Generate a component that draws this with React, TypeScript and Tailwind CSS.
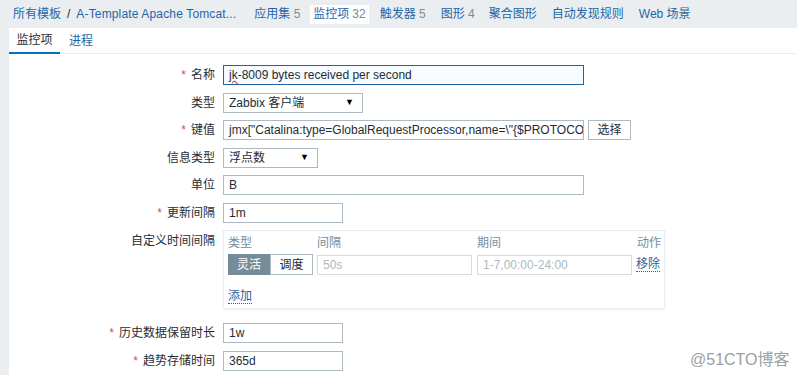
import React from "react";

const font = { fontFamily: '"Liberation Sans", Arial, "Noto Sans CJK SC", sans-serif' };

const KEY = 'jmx["Catalina:type=GlobalRequestProcessor,name=\\"{$PROTOCO';

function Req() {
  return <span className="text-[#d64e4e] mr-[5px]">*</span>;
}

function Label({ req, children }: { req?: boolean; children: React.ReactNode }) {
  return (
    <div className="h-[20px] flex items-center justify-end text-[#1f2c33] whitespace-nowrap">
      {req && <Req />}
      {children}
    </div>
  );
}

function Input({ w, children, cls = "" }: { w: string; children?: React.ReactNode; cls?: string }) {
  return (
    <div
      className={`h-[20px] border bg-white px-[5px] flex items-center overflow-hidden whitespace-nowrap ${w} ${cls || "border-[#acbbc2] text-[#1f2c33]"}`}
    >
      {children}
    </div>
  );
}

function Select({ w, children }: { w: string; children: React.ReactNode }) {
  return (
    <div className={`h-[20px] border border-[#acbbc2] bg-white pl-[5px] pr-[8px] flex items-center justify-between text-[#1f2c33] ${w}`}>
      <span>{children}</span>
      <span className="text-[9px] text-black">▼</span>
    </div>
  );
}

export default function App() {
  return (
    <div className="w-[797px] h-[375px] bg-[#ebeef0] relative overflow-hidden text-[12px]" style={font}>
      {/* top nav */}
      <div className="h-[28px] flex items-center pl-[13px] text-[#1f65a6] whitespace-nowrap">
        <span>所有模板</span>
        <span className="mx-[6px] text-[#1f2c33]">/</span>
        <span className="tracking-[0.15px]">A-Template Apache Tomcat...</span>
        <span className="ml-[18px]">应用集 <span className="text-[#768d99]">5</span></span>
        <span className="ml-[10px] bg-white px-[3px] h-[19px] flex items-center">
          监控项 <span className="text-[#768d99] ml-[3px]">32</span>
        </span>
        <span className="ml-[11px]">触发器 <span className="text-[#768d99]">5</span></span>
        <span className="ml-[15px]">图形 <span className="text-[#768d99]">4</span></span>
        <span className="ml-[14px]">聚合图形</span>
        <span className="ml-[15px]">自动发现规则</span>
        <span className="ml-[15px]">Web 场景</span>
      </div>

      {/* panel */}
      <div className="ml-[9px] bg-white h-[347px]">
        <div className="h-[26px] flex items-end border-b border-[#ebeef0]">
          <div className="w-[51px] h-[26px] flex items-center justify-center border-b-2 border-[#0275b8] text-[#1f2c33] -mb-px">
            监控项
          </div>
          <div className="ml-[9px] h-[24px] flex items-center text-[#1f65a6]">进程</div>
        </div>

        <div className="grid grid-cols-[206px_1fr] gap-x-[8px] gap-y-[7.5px] pt-[11px]">
          <Label req>名称</Label>
          <div className="w-[361px] h-[20px] border border-[#1f65a6] bg-[#f6fbff] px-[5px] flex items-center text-[#1f2c33] whitespace-nowrap overflow-hidden">
            <span className="underline decoration-wavy decoration-[#e04040]">jk</span>-8009 bytes received per second
          </div>

          <Label>类型</Label>
          <Select w="w-[140px]">Zabbix 客户端</Select>

          <Label req>键值</Label>
          <div className="flex items-center gap-[4px]">
            <Input w="w-[361px]">{KEY}</Input>
            <div className="h-[20px] w-[43px] border border-[#acbbc2] bg-white flex items-center justify-center text-[#1f2c33]">选择</div>
          </div>

          <Label>信息类型</Label>
          <Select w="w-[95px]">浮点数</Select>

          <Label>单位</Label>
          <Input w="w-[361px]">B</Input>

          <Label req>更新间隔</Label>
          <Input w="w-[120px]">1m</Input>

          <div className="h-[20px] flex items-center justify-end text-[#1f2c33] pt-[2px]">自定义时间间隔</div>
          <div className="w-[442px] h-[79px] border border-[#ebeef0] shadow-[0_1px_2px_rgba(0,0,0,0.06)] pl-[4px] pr-[3px] mb-[6.5px]">
            <div className="flex h-[23px] items-center text-[#768d99] pt-[1px]">
              <span className="w-[89px]">类型</span>
              <span className="w-[160px]">间隔</span>
              <span className="w-[159px]">期间</span>
              <span className="flex-1 text-right">动作</span>
            </div>
            <div className="flex items-center h-[21px]">
              <div className="flex w-[89px]">
                <div className="w-[42px] h-[21px] bg-[#768d99] text-white flex items-center justify-center">灵活</div>
                <div className="w-[43px] h-[21px] border border-[#acbbc2] bg-white text-[#1f2c33] flex items-center justify-center">调度</div>
              </div>
              <div className="w-[160px]">
                <Input w="w-[155px]" cls="border-[#d6dde0] text-[#acbbc2]">50s</Input>
              </div>
              <div className="w-[159px]">
                <Input w="w-[155px]" cls="border-[#d6dde0] text-[#acbbc2]">1-7,00:00-24:00</Input>
              </div>
              <span className="text-[#1f65a6] border-b border-dotted border-[#1f65a6] leading-[14px]">移除</span>
            </div>
            <div className="mt-[12px]">
              <span className="text-[#1f65a6] border-b border-dotted border-[#1f65a6] leading-[14px]">添加</span>
            </div>
          </div>

          <Label req>历史数据保留时长</Label>
          <Input w="w-[120px]">1w</Input>

          <Label req>趋势存储时间</Label>
          <Input w="w-[120px]">365d</Input>
        </div>
      </div>

      <div className="absolute left-[690px] top-[348px] text-[16px] text-[#9aa0a4] whitespace-nowrap" style={{ textShadow: "0 0 2px #fff" }}>
        @51CTO博客
      </div>
    </div>
  );
}
